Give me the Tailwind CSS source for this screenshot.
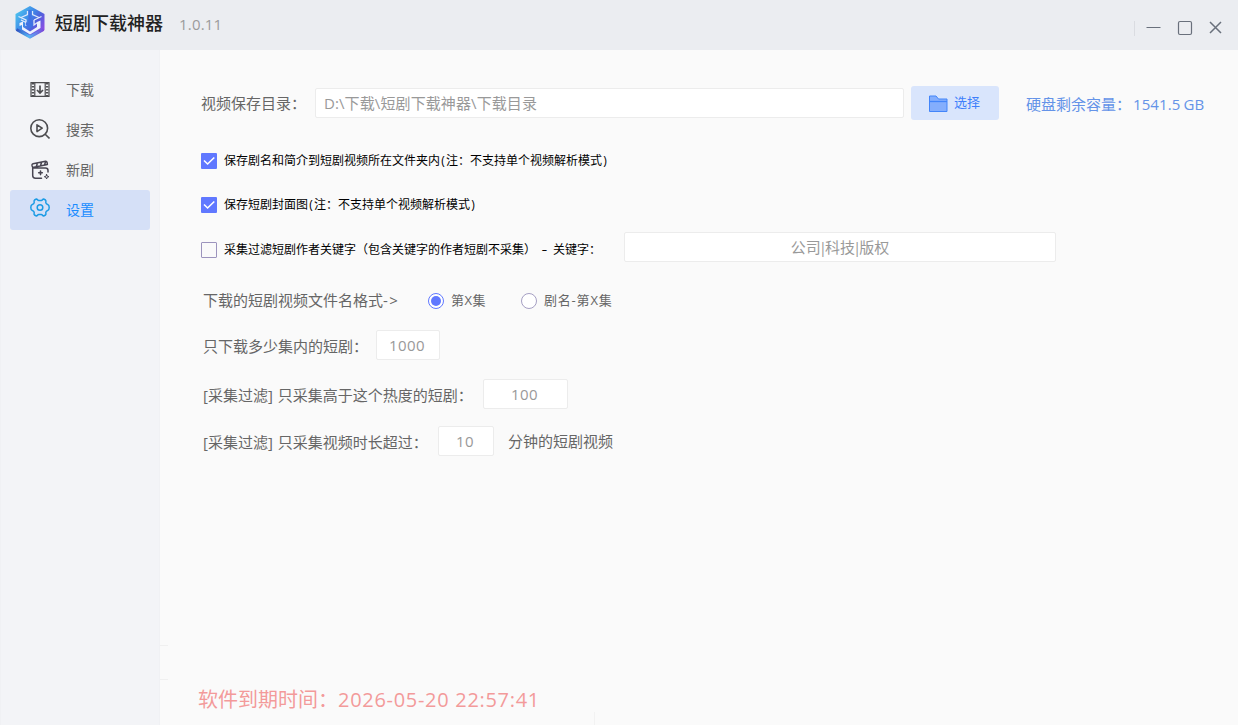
<!DOCTYPE html>
<html lang="zh-CN">
<head>
<meta charset="utf-8">
<title>短剧下载神器</title>
<script src="https://cdn.jsdelivr.net/npm/@tailwindcss/browser@4"></script>
</head>
<body class="w-[1238px] h-[725px] overflow-hidden bg-[#fafafa] font-['Open_Sans','Noto_Sans_CJK_SC',sans-serif] text-[15px] text-[#666666] whitespace-nowrap flex flex-col">
<header class="h-[50px] shrink-0 bg-[#ebedf1] flex items-center pl-[14px] pr-[15px]">
  <svg class="w-8 h-[34px] -mt-[6px]" viewBox="0 0 32 34" fill="none">
    <defs>
      <linearGradient id="lg" x1="2" y1="8" x2="30" y2="27" gradientUnits="userSpaceOnUse">
        <stop offset="0" stop-color="#4cc0ee"/><stop offset=".38" stop-color="#3f8be8"/><stop offset=".62" stop-color="#4d62dc"/><stop offset="1" stop-color="#9a4ae6"/>
      </linearGradient>
      <linearGradient id="lb" x1="4" y1="24" x2="28" y2="32" gradientUnits="userSpaceOnUse">
        <stop offset="0" stop-color="#3158c4"/><stop offset=".5" stop-color="#55b8f4"/><stop offset="1" stop-color="#7c3fd8"/>
      </linearGradient>
    </defs>
    <path d="M16 1 30.500 9v16L16 33 1.500 25V9Z" fill="url(#lg)"/>
    <path d="M2.500 24.500 16 32l13.500-7.500" stroke="url(#lb)" stroke-width="3"/>
    <path d="M13.500 6v3.500L7 12.500M18.500 6v3.500L25 12.500" stroke="#dfe9fb" stroke-width="1.300"/>
    <path d="M4.500 11.500 12 15v2.500l-5-2.500M27.500 11.500 20 15" stroke="#e3ebfc" stroke-width="1.300"/>
    <path d="M5.500 18 9 16.500V22l7 4.500 7-4.500v-5l3.500-1.500V23L16 29.500 8 24.500V20l-2.500 1Z" fill="#eef2fd"/>
    <path d="M20 15v5l3.500-2.500M12 17.500v3.500" stroke="#e3ebfc" stroke-width="1.300"/>
    <path d="M14.500 5h3v13l1.500-1v4L16 24l-4-4v-3l2.500 1.500Z" fill="#3f73e4"/>
  </svg>
  <h1 class="ml-[9px] -mt-[4px] text-[18px] leading-6 font-medium text-[#222222]">短剧下载神器</h1>
  <span class="ml-[16px] -mt-[2px] text-[15px] leading-5 tracking-[0.2px] text-[#9b9b9b]">1.0.11</span>
  <div class="ml-auto mt-[6px] flex items-center">
    <i class="w-px h-[15px] bg-[#dadce1]"></i>
    <svg class="ml-[10px] w-4 h-4" viewBox="0 0 16 16" fill="none" stroke="#69707c"><path d="M1.500 7.500h14"/></svg>
    <svg class="ml-4 w-4 h-4" viewBox="0 0 16 16" fill="none" stroke="#69707c" stroke-width="1.200"><rect x="1.500" y="1.500" width="13" height="13" rx="1.500"/></svg>
    <svg class="ml-[14px] w-4 h-4" viewBox="0 0 16 16" fill="none" stroke="#69707c" stroke-width="1.500"><path d="M3 2 14 13M14 2 3 13"/></svg>
  </div>
</header>
<div class="flex flex-1">
  <aside class="w-[160px] bg-[#f3f4f7] border-l border-r border-[#f0f1f4] pt-5 pl-[9px] pr-[9px]">
    <nav class="text-[14px] leading-5">
      <a class="h-10 pl-5 flex items-center gap-4">
        <svg class="w-5 h-5" viewBox="0 0 20 20" fill="none" stroke="#4d4d50"><path d="M1 2.700h18v13.600H1ZM4.800 2.700v13.600M15.200 2.700v13.600" stroke-width="1.200"/><path d="M2.900 3v14M17.100 3v14" stroke-width="2.400" stroke-dasharray="1.500 1.500"/><path d="M10 5.500v7M7 10l3 3 3-3" stroke-width="1.700"/></svg>
        <span>下载</span></a>
      <a class="h-10 pl-5 flex items-center gap-4">
        <svg class="w-5 h-5 -mt-[2px]" viewBox="0 0 20 20" fill="none" stroke="#4d4d50" stroke-width="1.600"><circle cx="9.200" cy="9.200" r="8.400"/><path d="M15.200 15.200 19.500 19.500"/><path d="M7 5.800v6.800l5.200-3.400Z" stroke-linejoin="round"/></svg>
        <span>搜索</span></a>
      <a class="h-10 pl-5 flex items-center gap-4">
        <svg class="w-5 h-5 -mt-px" viewBox="0 0 20 20" fill="none" stroke="#484552" stroke-width="1.500" stroke-linejoin="round" stroke-linecap="round"><path d="M11.500 18.200H5.500Q2.700 18.200 2.700 15.500V8H15.500Q18 8 18 10.500V12M2.700 7.600 2 5.500Q1.700 4.200 3 3.700L15.500 1.200Q16.700 1 17 2.200L17.400 4.400 2.700 7.400M7.500 2.900 6.300 6.500M11.700 2.100 10.500 5.700M15.700 1.300 14.500 4.900"/><path d="M10.500 11v3.600M8.700 12.800h3.600" stroke-width="1.600"/><path d="m16.600 14.400.6 1.700 1.700.6-1.700.6-.6 1.700-.6-1.700-1.700-.6 1.700-.6Z" stroke-width="1"/></svg>
        <span>新剧</span></a>
      <a class="h-10 pl-5 flex items-center gap-4 rounded-[3px] bg-[#d5e0f7] text-[#1a8cff]">
        <svg class="w-5 h-5 -mt-[4px]" viewBox="0 0 20 20" fill="none" stroke="#1b9be5" stroke-width="1.500" stroke-linejoin="round"><path d="M10 2.500H11.300C12.500 2.500 12.500.9 13.600 1L15.500 2C16.400 2.700 15.700 3.600 15.800 4.700 16 5.900 16.500 6.300 17.700 6.600 18.900 6.900 19.200 7.800 19.200 9.500 19.200 11.200 18.900 12.100 17.700 12.400 16.500 12.700 16 13.100 15.800 14.300 15.700 15.400 16.400 16.300 15.500 17L13.600 18C12.500 18.100 12.500 16.500 11.300 16.500H8.700C7.500 16.500 7.500 18.100 6.400 18L4.500 17C3.600 16.300 4.300 15.400 4.200 14.300 4 13.100 3.500 12.700 2.300 12.400 1.100 12.100.8 11.200.8 9.500.8 7.800 1.100 6.900 2.300 6.600 3.500 6.300 4 5.900 4.200 4.700 4.300 3.600 3.600 2.700 4.500 2L6.400 1C7.500.9 7.500 2.500 8.700 2.500Z"/><circle cx="10" cy="9.500" r="2.800"/></svg>
        <span>设置</span></a>
    </nav>
  </aside>
  <main class="relative flex-1 pt-9 pl-[41px] flex flex-col">
    <section class="h-[34px] flex items-center">
      <label class="w-[114px]">视频保存目录：</label>
      <div class="w-[589px] h-[30px] border border-[#ececec] rounded-[2px] bg-white pl-2 leading-[28px] tracking-[0.1px] text-[#999999]">D:\下载\短剧下载神器\下载目录</div>
      <button class="ml-[7px] w-[88px] h-[34px] rounded-[3px] bg-[#d9e5fc] flex items-center pl-[18px] text-[13px] text-[#3f7ffb]">
        <svg class="w-[19px] h-[17px]" viewBox="0 0 19 17"><path d="M.5 1h6.500l2.500 3h8.500v12.500H.5Z" fill="#84aefd" stroke="#4285fa"/><path d="M.5 6.500h17.500" stroke="#4285fa" stroke-width="1.300"/></svg>
        <span class="ml-[6px] -mt-px">选择</span>
      </button>
      <span class="ml-[27px] mt-[2px] text-[#6493e8]">硬盘剩余容量：<span class="ml-[2px] tracking-[0.1px]">1541.5<span class="ml-[3px]">GB</span></span></span>
    </section>
    <section class="mt-[30px] h-[22px] flex items-center text-[12px] text-black">
      <svg class="w-4 h-4" viewBox="0 0 16 16"><rect width="16" height="16" rx="1" fill="#6078ff"/><path d="m3 7.500 3.600 3.500L13.300 4.500" fill="none" stroke="#fff" stroke-width="1.600"/></svg>
      <span class="ml-[7px] -mt-px">保存剧名和简介到短剧视频所在文件夹内<span class="inline-block w-[6px] text-center">(</span>注：不支持单个视频解析模式<span class="inline-block w-[6px] text-center">)</span></span>
    </section>
    <section class="mt-[22px] h-[22px] flex items-center text-[12px] text-black">
      <svg class="w-4 h-4" viewBox="0 0 16 16"><rect width="16" height="16" rx="1" fill="#6078ff"/><path d="m3 7.500 3.600 3.500L13.300 4.500" fill="none" stroke="#fff" stroke-width="1.600"/></svg>
      <span class="ml-[7px] -mt-px">保存短剧封面图<span class="inline-block w-[6px] text-center">(</span>注：不支持单个视频解析模式<span class="inline-block w-[6px] text-center">)</span></span>
    </section>
    <section class="mt-4 h-[30px] flex items-center">
      <i class="mt-[6px] w-4 h-4 border border-[#9c94bd] rounded-[1px]"></i>
      <span class="ml-[7px] mt-[5px] w-[400px] text-[12px] text-black">采集过滤短剧作者关键字（包含关键字的作者短剧不采集）<span class="inline-block w-[17px] text-center scale-x-150">-</span>关键字：</span>
      <div class="w-[432px] h-[30px] border border-[#ececec] rounded-[2px] bg-white text-center leading-[28px] text-[#999999]">公司<span class="-mx-[2px]">|</span>科技<span class="-mx-[2px]">|</span>版权</div>
    </section>
    <section class="mt-6 h-[30px] flex items-center">
      <span class="ml-[2px] w-[225px] -mt-px">下载的短剧视频文件名格式<span class="tracking-[1.5px]">-&gt;</span></span>
      <svg class="w-4 h-4" viewBox="0 0 16 16"><circle cx="8" cy="8" r="7.500" fill="#fff" stroke="#6078ff"/><circle cx="8" cy="8" r="5" fill="#6078ff"/></svg>
      <span class="ml-[7px] w-[70px] text-[13px] tracking-[0.5px] -mt-px">第X集</span>
      <svg class="w-4 h-4" viewBox="0 0 16 16"><circle cx="8" cy="8" r="7.500" fill="#fff" stroke="#a59fc3"/></svg>
      <span class="ml-[7px] text-[13px] tracking-[0.8px] -mt-px">剧名-第X集</span>
    </section>
    <section class="mt-[14px] h-[30px] flex items-center">
      <span class="ml-[2px] mt-[2px] w-[173px]">只下载多少集内的短剧：</span>
      <div class="w-16 h-[30px] border border-[#ececec] rounded-[2px] bg-white text-center leading-[28px] pr-[2px] tracking-[0.4px] text-[#999999]">1000</div>
    </section>
    <section class="mt-[19px] h-[30px] flex items-center">
      <span class="ml-[2px] mt-[2px] w-[280px]">[采集过滤]<span class="ml-[5px]">只采集高于这个热度的短剧：</span></span>
      <div class="w-[85px] h-[30px] border border-[#ececec] rounded-[2px] bg-white text-center leading-[28px] pr-[2px] tracking-[0.4px] text-[#999999]">100</div>
    </section>
    <section class="mt-[17px] h-[30px] flex items-center">
      <span class="ml-[2px] mt-[2px] w-[235px]">[采集过滤]<span class="ml-[5px]">只采集视频时长超过：</span></span>
      <div class="w-14 h-[30px] border border-[#ececec] rounded-[2px] bg-white text-center leading-[28px] pr-[2px] tracking-[0.4px] text-[#999999]">10</div>
      <span class="ml-[14px]">分钟的短剧视频</span>
    </section>
    <footer class="mt-auto mb-[10px] -ml-[3px] text-[20px] leading-[30px] text-[#f39a9a]">软件到期时间：<span class="tracking-[0.7px]">2026-05-20 22:57:41</span></footer>
    <i class="absolute left-0 top-[595px] w-[8px] h-[35px] border-y border-[#f0f0f0]"></i>
    <i class="absolute left-[434px] bottom-0 w-px h-[13px] bg-[#f2f2f2]"></i>
  </main>
</div>
</body>
</html>
